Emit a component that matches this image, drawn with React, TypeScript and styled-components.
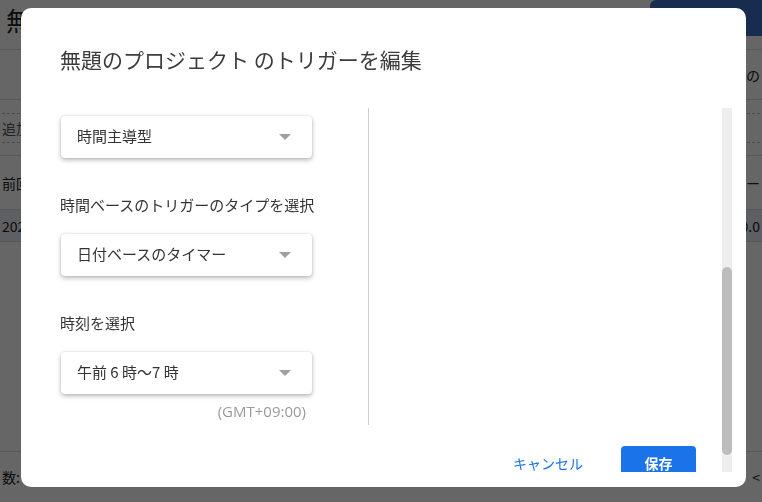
import React from "react";
import styled, { createGlobalStyle } from "styled-components";

const Global = createGlobalStyle`
  html, body { margin: 0; padding: 0; background: #fff; }
  body { font-family: "Noto Sans CJK JP", "Noto Sans", sans-serif; overflow: hidden; }
  * { box-sizing: border-box; }
`;

const Page = styled.div`
  width: 762px;
  height: 502px;
  display: flex;
  flex-direction: column;
  color: #202124;
  overflow: hidden;
`;

const Header = styled.div`
  height: 50px;
  display: flex;
  align-items: flex-start;
  justify-content: space-between;
  border-bottom: 1px solid #dadce0;
`;

const PageTitle = styled.div`
  font-size: 26px;
  line-height: 40px;
  padding-left: 6px;
  color: #202124;
`;

const TopButton = styled.div`
  width: 112px;
  height: 36px;
  background: #3a6fc4;
  border-radius: 6px 0 0 6px;
`;

const BgRow = styled.div<{ $h: number; $bg?: string }>`
  height: ${(p) => p.$h}px;
  display: flex;
  align-items: center;
  justify-content: space-between;
  border-bottom: 1px solid #dadce0;
  background: ${(p) => p.$bg || "transparent"};
  font-size: 14px;
  padding: 0 2px;
`;

const DashedBox = styled.div`
  height: 30px;
  flex: 1;
  border-top: 1px dashed #bbb;
  border-bottom: 1px dashed #bbb;
  display: flex;
  align-items: center;
  font-size: 14px;
  color: #555;
`;

const Spacer = styled.div`
  flex: 1;
  border-bottom: 1px solid #dadce0;
`;

const Footer = styled.div`
  height: 50px;
  display: flex;
  align-items: center;
  justify-content: space-between;
  font-size: 14px;
  padding: 0 2px;
`;

const Overlay = styled.div`
  position: fixed;
  inset: 0;
  background: rgba(0, 0, 0, 0.6);
`;

const Modal = styled.div`
  position: fixed;
  left: 21px;
  top: 8px;
  width: 725px;
  height: 479px;
  background: #fff;
  border-radius: 10px;
  display: flex;
  flex-direction: column;
  overflow: hidden;
`;

const Title = styled.h2`
  margin: 0;
  height: 100px;
  padding: 37px 0 0 39px;
  font-size: 21px;
  line-height: 28px;
  font-weight: 400;
  color: #3c3c3c;
  flex-shrink: 0;
`;

const Body = styled.div`
  display: flex;
  height: 364px;
`;

const Scroll = styled.div`
  flex: 1;
  overflow: hidden;
  padding-left: 39px;
  display: flex;
  flex-direction: column;
`;

const Track = styled.div`
  width: 10px;
  margin: 0 14px 0 0;
  background: #eeeeee;
  display: flex;
  flex-direction: column;
  justify-content: flex-end;
  padding-bottom: 17px;
`;

const Thumb = styled.div`
  height: 188px;
  background: #bdbdbd;
  border-radius: 5px;
`;

const Columns = styled.div`
  height: 317px;
  display: flex;
  flex-shrink: 0;
`;

const LeftCol = styled.div`
  width: 308px;
  padding-top: 8px;
  display: flex;
  flex-direction: column;
  align-items: flex-start;
`;

const Divider = styled.div`
  width: 1px;
  background: #cfcfcf;
`;

const Select = styled.div<{ $mt?: number }>`
  width: 251px;
  height: 42px;
  margin-left: 1px;
  margin-top: ${(p) => p.$mt || 0}px;
  background: #fff;
  border-radius: 4px;
  box-shadow: 0 2px 5px rgba(0, 0, 0, 0.28), 0 0 2px rgba(0, 0, 0, 0.12);
  display: flex;
  align-items: center;
  justify-content: space-between;
  padding: 0 21px 3px 16px;
  font-size: 15px;
  color: #333;
`;

const Caret = styled.span`
  width: 0;
  height: 0;
  margin-top: 3px;
  border-left: 6px solid transparent;
  border-right: 6px solid transparent;
  border-top: 6px solid #a0a0a0;
`;

const Label = styled.div<{ $mt: number }>`
  margin-top: ${(p) => p.$mt}px;
  font-size: 15px;
  line-height: 20px;
  color: #333;
`;

const Zone = styled.div`
  align-self: stretch;
  width: 246px;
  margin-top: 8px;
  text-align: right;
  font-family: "Open Sans", Roboto, sans-serif;
  font-size: 15px;
  line-height: 18px;
  color: #9a9a9a;
`;

const Actions = styled.div`
  margin-top: 21px;
  display: flex;
  justify-content: flex-end;
  align-items: center;
  padding-right: 26px;
  flex-shrink: 0;
`;

const TextButton = styled.button`
  height: 36px;
  padding: 0 16px 2px;
  margin-right: 22px;
  border: none;
  background: transparent;
  font-family: inherit;
  font-size: 14px;
  line-height: 16px;
  color: #1a73e8;
`;

const PrimaryButton = styled.button`
  width: 75px;
  height: 36px;
  padding: 0 0 2px;
  border: none;
  border-radius: 4px;
  background: #1a73e8;
  color: #fff;
  font-family: inherit;
  font-size: 14px;
  line-height: 16px;
  font-weight: 700;
`;

export default function App() {
  return (
    <>
      <Global />
      <Page>
        <Header>
          <PageTitle>無題のプロジェクト</PageTitle>
          <TopButton />
        </Header>
        <BgRow $h={50}>
          <span />
          <span>個の</span>
        </BgRow>
        <BgRow $h={56}>
          <DashedBox>追加</DashedBox>
        </BgRow>
        <BgRow $h={54}>
          <span>前回</span>
          <span>ラー</span>
        </BgRow>
        <BgRow $h={32} $bg="#e8eef7">
          <span>2020</span>
          <span>0.0</span>
        </BgRow>
        <Spacer />
        <Footer>
          <span>数:</span>
          <span>&lt;</span>
        </Footer>
      </Page>
      <Overlay />
      <Modal>
        <Title>無題のプロジェクト のトリガーを編集</Title>
        <Body>
          <Scroll>
            <Columns>
              <LeftCol>
                <Select>
                  <span>時間主導型</span>
                  <Caret />
                </Select>
                <Label $mt={37}>時間ベースのトリガーのタイプを選択</Label>
                <Select $mt={19}>
                  <span>日付ベースのタイマー</span>
                  <Caret />
                </Select>
                <Label $mt={37}>時刻を選択</Label>
                <Select $mt={19}>
                  <span>午前 6 時〜7 時</span>
                  <Caret />
                </Select>
                <Zone>(GMT+09:00)</Zone>
              </LeftCol>
              <Divider />
            </Columns>
            <Actions>
              <TextButton>キャンセル</TextButton>
              <PrimaryButton>保存</PrimaryButton>
            </Actions>
          </Scroll>
          <Track>
            <Thumb />
          </Track>
        </Body>
      </Modal>
    </>
  );
}
